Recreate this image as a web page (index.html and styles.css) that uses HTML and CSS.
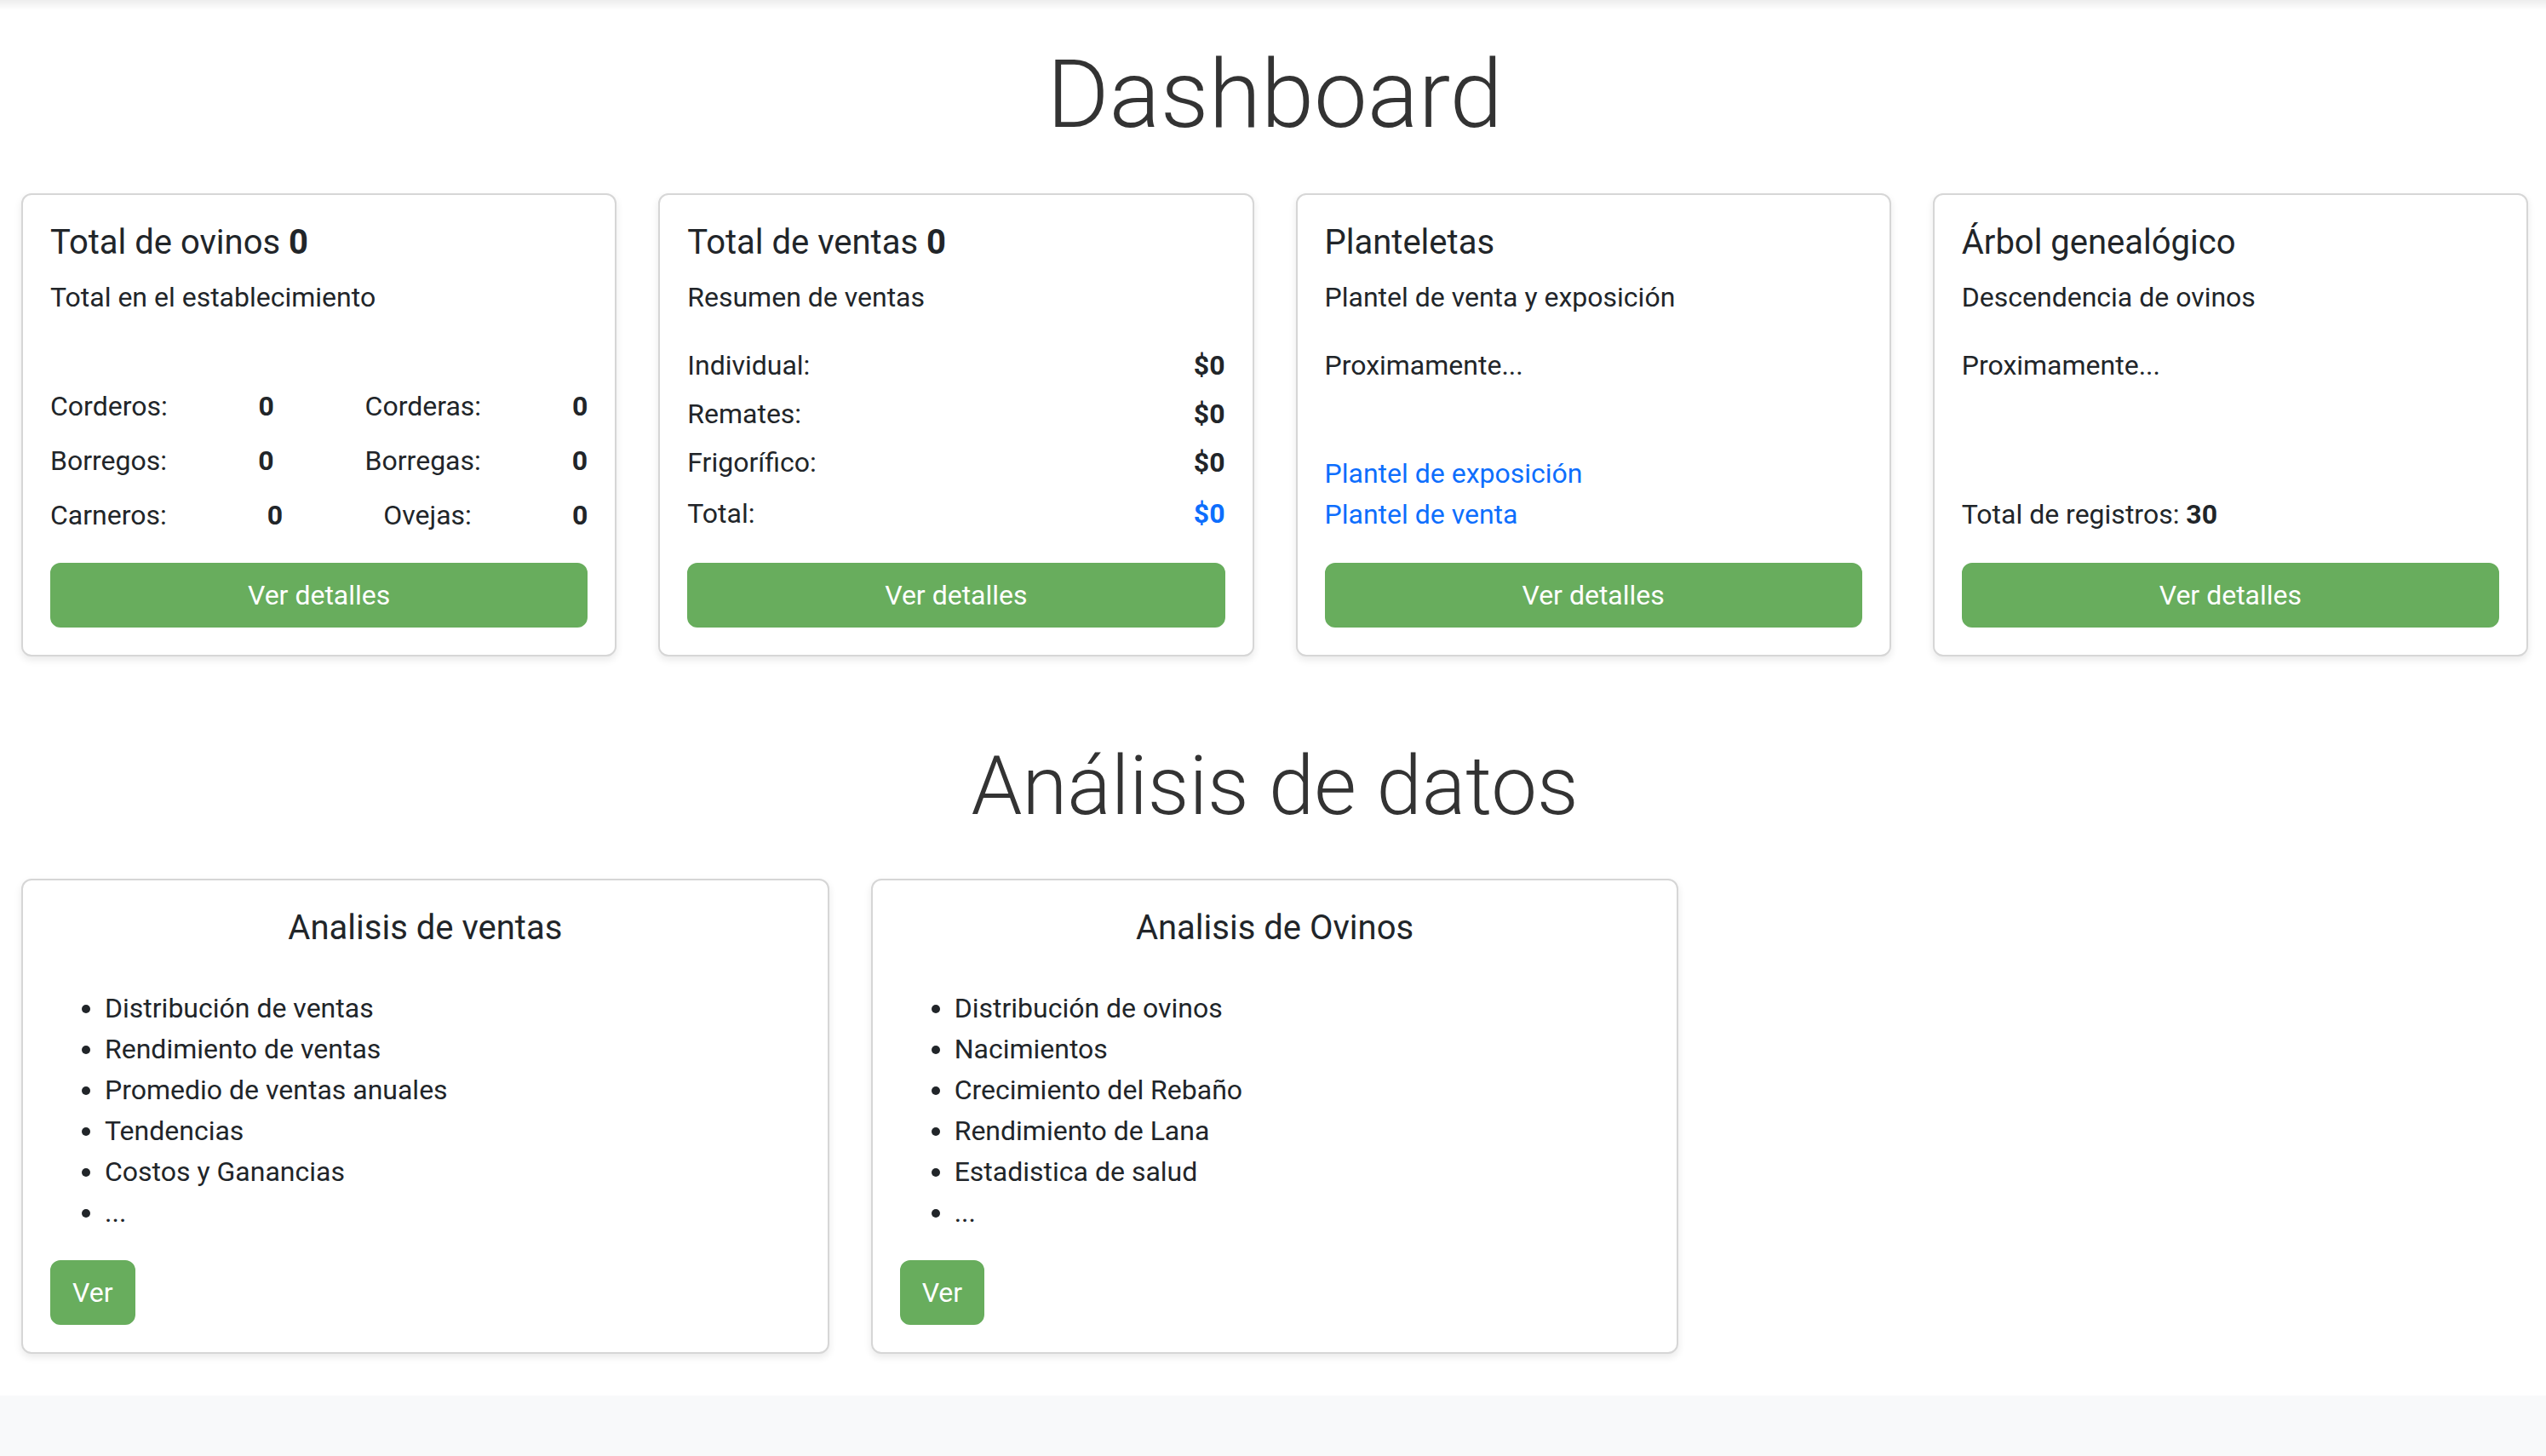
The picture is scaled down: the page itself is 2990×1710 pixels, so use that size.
FILE: index.html
```html
<!DOCTYPE html>
<html lang="es">
<head>
<meta charset="utf-8">
<title>Dashboard</title>
<link rel="stylesheet" href="styles.css">
</head>
<body>
<div class="nav-shadow"></div>
<main class="page">
  <h1 class="page-title">Dashboard</h1>
  <div class="cards-4">
    <div class="card">
      <div class="card-body">
        <h5 class="card-title">Total de ovinos <b>0</b></h5>
        <p class="card-sub">Total en el establecimiento</p>
        <div class="stats">
          <div class="stat-row"><span>Corderos:</span><b>0</b><span>Corderas:</span><b>0</b></div>
          <div class="stat-row"><span>Borregos:</span><b>0</b><span>Borregas:</span><b>0</b></div>
          <div class="stat-row"><span>Carneros:</span><b>0</b><span>Ovejas:</span><b>0</b></div>
        </div>
        <div class="foot"><a class="btn btn-block" href="#">Ver detalles</a></div>
      </div>
    </div>
    <div class="card">
      <div class="card-body">
        <h5 class="card-title">Total de ventas <b>0</b></h5>
        <p class="card-sub">Resumen de ventas</p>
        <div class="sales">
          <div class="sale-row"><span>Individual:</span><b>$0</b></div>
          <div class="sale-row"><span>Remates:</span><b>$0</b></div>
          <div class="sale-row"><span>Frigorífico:</span><b>$0</b></div>
          <div class="sale-row total"><span>Total:</span><b class="blue">$0</b></div>
        </div>
        <div class="foot"><a class="btn btn-block" href="#">Ver detalles</a></div>
      </div>
    </div>
    <div class="card">
      <div class="card-body">
        <h5 class="card-title">Planteletas</h5>
        <p class="card-sub">Plantel de venta y exposición</p>
        <p class="soon">Proximamente...</p>
        <div class="foot">
          <a class="link" href="#">Plantel de exposición</a>
          <a class="link" href="#">Plantel de venta</a>
          <a class="btn btn-block spaced" href="#">Ver detalles</a>
        </div>
      </div>
    </div>
    <div class="card">
      <div class="card-body">
        <h5 class="card-title">Árbol genealógico</h5>
        <p class="card-sub">Descendencia de ovinos</p>
        <p class="soon">Proximamente...</p>
        <div class="foot">
          <p class="line">Total de registros: <b>30</b></p>
          <a class="btn btn-block spaced" href="#">Ver detalles</a>
        </div>
      </div>
    </div>
  </div>

  <h2 class="section-title">Análisis de datos</h2>
  <div class="cards-3">
    <div class="card">
      <div class="card-body">
        <h5 class="card-title center">Analisis de ventas</h5>
        <ul class="topics">
          <li>Distribución de ventas</li>
          <li>Rendimiento de ventas</li>
          <li>Promedio de ventas anuales</li>
          <li>Tendencias</li>
          <li>Costos y Ganancias</li>
          <li>...</li>
        </ul>
        <div><a class="btn" href="#">Ver</a></div>
      </div>
    </div>
    <div class="card">
      <div class="card-body">
        <h5 class="card-title center">Analisis de Ovinos</h5>
        <ul class="topics">
          <li>Distribución de ovinos</li>
          <li>Nacimientos</li>
          <li>Crecimiento del Rebaño</li>
          <li>Rendimiento de Lana</li>
          <li>Estadistica de salud</li>
          <li>...</li>
        </ul>
        <div><a class="btn" href="#">Ver</a></div>
      </div>
    </div>
  </div>
</main>
<footer class="footer">
  <p class="footer-text">© 2024 Gestión de ovinos. Todos los derechos reservados.</p>
</footer>
</body>
</html>
```

FILE: styles.css
```css
* { box-sizing: border-box; }

html, body {
  margin: 0;
  padding: 0;
}

body {
  font-family: Roboto, "Noto Sans", "Liberation Sans", sans-serif;
  font-size: 32px;
  line-height: 1.5;
  color: #212529;
  background: #fff;
}

.nav-shadow {
  height: 12px;
  background: linear-gradient(to bottom, rgba(0, 0, 0, 0.07), rgba(0, 0, 0, 0));
}

.page {
  padding: 0 21px 0 25px;
}

.page-title {
  font-size: 112px;
  font-weight: 300;
  line-height: 1.2;
  color: #333;
  text-align: center;
  margin: 32px 0 49px;
}

.section-title {
  font-size: 96px;
  font-weight: 300;
  line-height: 1.2;
  color: #333;
  text-align: center;
  margin: 95px 0 50px;
}

.cards-4 {
  display: grid;
  grid-template-columns: repeat(4, minmax(0, 1fr));
  column-gap: 49px;
}

.cards-3 {
  display: grid;
  grid-template-columns: repeat(3, minmax(0, 1fr));
  column-gap: 49px;
}

.card {
  background: #fff;
  border: 2px solid #d6d6d6;
  border-radius: 12px;
  box-shadow: 0 4px 10px rgba(0, 0, 0, 0.09);
}

.card-body {
  padding: 32px;
  height: 100%;
  display: flex;
  flex-direction: column;
}

.card-title {
  font-size: 40px;
  font-weight: 400;
  line-height: 48px;
  margin: 0 0 16px;
}

.card-title b { font-weight: 700; }

.card-title.center {
  text-align: center;
  margin-bottom: 46px;
}

.card-sub {
  margin: 0;
  line-height: 48px;
}

.stats {
  margin: 72px 0 24px;
}

.stat-row {
  display: flex;
  justify-content: space-between;
  padding: 8px 0;
  line-height: 48px;
}

.sales {
  margin-top: 32px;
}

.sale-row {
  display: flex;
  justify-content: space-between;
  line-height: 48px;
  margin-bottom: 9px;
}

.sale-row.total {
  margin-top: 12px;
  margin-bottom: 0;
}

.blue { color: #0d6efd; }

.soon {
  margin: 32px 0 0;
  line-height: 48px;
}

.foot {
  margin-top: auto;
  display: flex;
  flex-direction: column;
}

.link {
  color: #0d6efd;
  text-decoration: none;
  line-height: 48px;
  align-self: flex-start;
}

.line {
  margin: 0;
  line-height: 48px;
}

.btn {
  display: inline-block;
  background: #68ad5d;
  border: 2px solid #68ad5d;
  color: #fff;
  border-radius: 12px;
  padding: 12px 24px;
  font-size: 32px;
  line-height: 48px;
  text-align: center;
  text-decoration: none;
}

.btn-block {
  display: block;
  width: 100%;
}

.btn.spaced {
  margin-top: 33px;
}

.topics {
  margin: 0 0 32px;
  padding-left: 64px;
}

.topics li {
  line-height: 48px;
}

.footer {
  margin-top: 49px;
  background: #f8f9fa;
  padding: 70px 0 80px;
}

.footer-text {
  margin: 0;
  text-align: center;
  color: #6c757d;
}
```
